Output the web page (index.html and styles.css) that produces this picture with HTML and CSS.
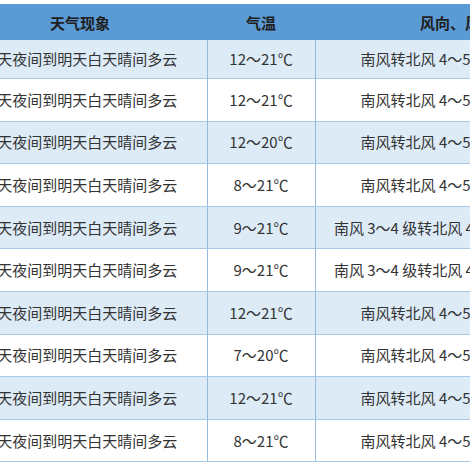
FILE: index.html
```html
<!DOCTYPE html>
<html lang="zh-CN">
<head>
<meta charset="utf-8">
<link rel="stylesheet" href="styles.css">
</head>
<body>
<table class="weather">
  <colgroup>
    <col class="c1"><col class="c2"><col class="c3">
  </colgroup>
  <thead>
    <tr><th>天气现象</th><th>气温</th><th class="wind-head">风向、风力</th></tr>
  </thead>
  <tbody>
    <tr class="first"><td>今天夜间到明天白天晴间多云</td><td>12～21℃</td><td>南风转北风 4～5 级</td></tr>
    <tr><td>今天夜间到明天白天晴间多云</td><td>12～21℃</td><td>南风转北风 4～5 级</td></tr>
    <tr><td>今天夜间到明天白天晴间多云</td><td>12～20℃</td><td>南风转北风 4～5 级</td></tr>
    <tr><td>今天夜间到明天白天晴间多云</td><td>8～21℃</td><td>南风转北风 4～5 级</td></tr>
    <tr><td>今天夜间到明天白天晴间多云</td><td>9～21℃</td><td>南风 3～4 级转北风 4～5 级</td></tr>
    <tr><td>今天夜间到明天白天晴间多云</td><td>9～21℃</td><td>南风 3～4 级转北风 4～5 级</td></tr>
    <tr><td>今天夜间到明天白天晴间多云</td><td>12～21℃</td><td>南风转北风 4～5 级</td></tr>
    <tr><td>今天夜间到明天白天晴间多云</td><td>7～20℃</td><td>南风转北风 4～5 级</td></tr>
    <tr><td>今天夜间到明天白天晴间多云</td><td>12～21℃</td><td>南风转北风 4～5 级</td></tr>
    <tr><td>今天夜间到明天白天晴间多云</td><td>8～21℃</td><td>南风转北风 4～5 级</td></tr>
  </tbody>
</table>
</body>
</html>
```
FILE: styles.css
```css
html, body {
  margin: 0;
  padding: 0;
  background: #ffffff;
  overflow: hidden;
  width: 470px;
  height: 470px;
}
.weather {
  margin: 4px 0 0 -47px;
  border-collapse: collapse;
  table-layout: fixed;
  width: 581px;
  font-family: "Noto Sans CJK SC", "Microsoft YaHei", sans-serif;
  font-size: 15px;
  color: #333333;
}
.c1 { width: 254px; }
.c2 { width: 108px; }
.c3 { width: 219px; }
.weather th {
  background: #5b9bd5;
  height: 36px;
  padding: 0;
  font-weight: bold;
  color: #1e1e1e;
  text-align: center;
  white-space: nowrap;
  border: none;
}
.weather th.wind-head {
  text-align: left;
  padding-left: 105px;
}
.weather td {
  height: 41.6px;
  padding: 0;
  text-align: center;
  vertical-align: middle;
  white-space: nowrap;
  border-top: 1px solid #a9c9e8;
  border-bottom: 1px solid #a9c9e8;
  line-height: 18px;
}
.weather td + td {
  border-left: 1px solid #95b8df;
}
.weather tr.first td {
  height: 38px;
  border-top: none;
}
.weather tbody tr:nth-child(odd) td {
  background: #ddebf7;
}
.weather tbody tr:nth-child(even) td {
  background: #ffffff;
}
```
